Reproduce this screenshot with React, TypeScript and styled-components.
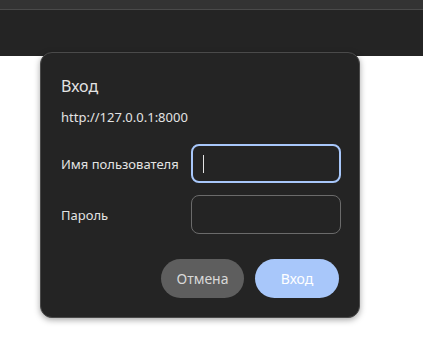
import React from "react";
import styled, { createGlobalStyle } from "styled-components";

const Global = createGlobalStyle`
  html, body { margin: 0; padding: 0; background: #ffffff; }
  body { font-family: "Noto Sans", "Open Sans", sans-serif; }
`;

const Page = styled.div`
  position: relative;
  width: 423px;
  height: 338px;
  overflow: hidden;
  background: #ffffff;
`;

const TopStrip = styled.div`
  height: 9px;
  background: #333333;
  border-bottom: 1px solid #4a4a4a;
`;

const Toolbar = styled.div`
  height: 46px;
  background: #242424;
`;

const Dialog = styled.div`
  position: absolute;
  left: 40px;
  top: 52px;
  width: 320px;
  height: 266px;
  box-sizing: border-box;
  background: #242424;
  border: 1px solid #4a4a4a;
  border-radius: 12px;
  box-shadow: 0 2px 6px rgba(0, 0, 0, 0.35);
  padding: 22px 20px 20px 20px;
  display: flex;
  flex-direction: column;
  color: #e3e3e3;
`;

const Title = styled.div`
  font-size: 16px;
  line-height: 22px;
  color: #e3e3e3;
`;

const Origin = styled.div`
  margin-top: 11px;
  font-size: 13px;
  line-height: 18px;
  color: #e3e3e3;
`;

const Form = styled.div`
  margin-top: 18px;
  display: grid;
  grid-template-columns: 130px 150px;
  row-gap: 12px;
  align-items: center;
`;

const Label = styled.label`
  font-size: 13px;
  color: #e3e3e3;
`;

const Input = styled.div<{ $focused?: boolean }>`
  height: 39px;
  box-sizing: border-box;
  border-radius: 8px;
  border: ${(p) => (p.$focused ? "2px solid #a8c7fa" : "1px solid #6b6b6b")};
  display: flex;
  align-items: center;
  padding-left: ${(p) => (p.$focused ? "10px" : "11px")};
`;

const Caret = styled.div`
  width: 1px;
  height: 18px;
  background: #e3e3e3;
`;

const Buttons = styled.div`
  margin-top: 25px;
  display: flex;
  justify-content: flex-end;
  gap: 11px;
`;

const Button = styled.div<{ $primary?: boolean }>`
  height: 39px;
  border-radius: 20px;
  box-sizing: border-box;
  justify-content: center;
  width: ${(p) => (p.$primary ? "84px" : "83px")};
  display: flex;
  align-items: center;
  font-size: 14px;
  background: ${(p) => (p.$primary ? "#a8c7fa" : "#5e5e5e")};
  color: ${(p) => (p.$primary ? "#ffffff" : "#d8d8d8")};
`;

export default function App() {
  return (
    <Page>
      <Global />
      <TopStrip />
      <Toolbar />
      <Dialog>
        <Title>Вход</Title>
        <Origin>http://127.0.0.1:8000</Origin>
        <Form>
          <Label>Имя пользователя</Label>
          <Input $focused>
            <Caret />
          </Input>
          <Label>Пароль</Label>
          <Input />
        </Form>
        <Buttons>
          <Button>Отмена</Button>
          <Button $primary>Вход</Button>
        </Buttons>
      </Dialog>
    </Page>
  );
}
